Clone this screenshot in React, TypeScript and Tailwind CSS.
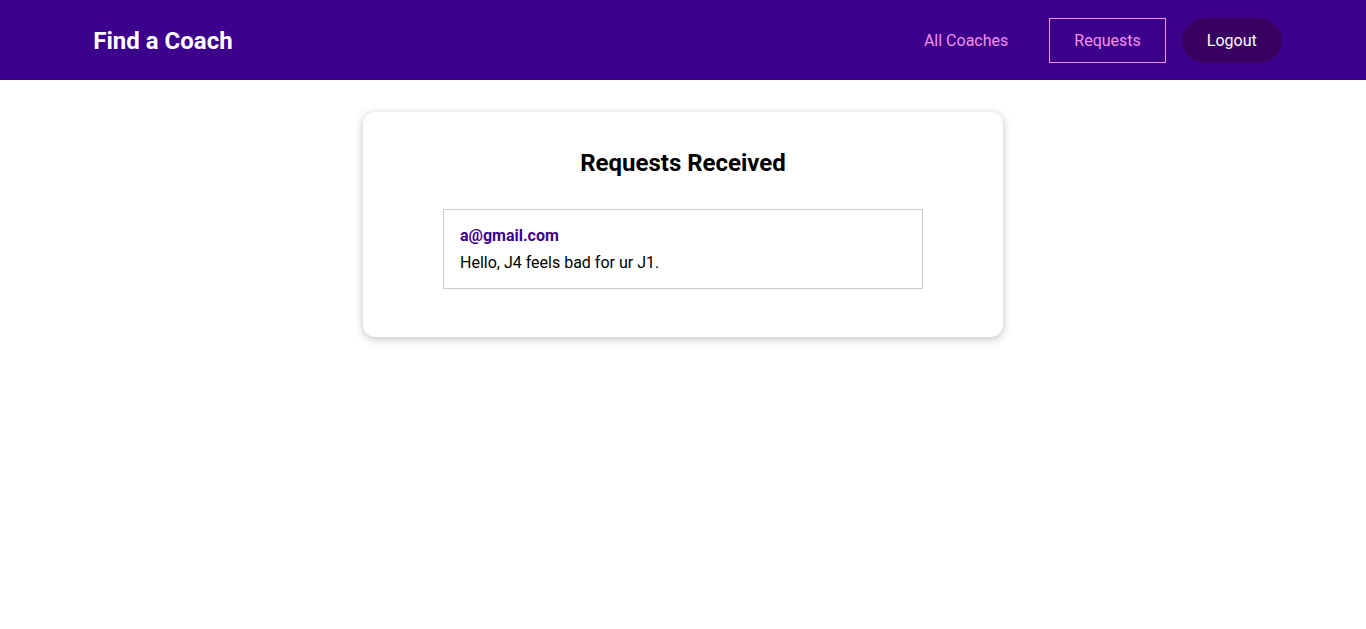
const requests = [{ id: 'r1', email: 'a@gmail.com', message: 'Hello, J4 feels bad for ur J1.' }]

export default function App() {
  return (
    <div className="min-h-screen bg-white text-black" style={{ fontFamily: 'Roboto, "Noto Sans", sans-serif' }}>
      <header className="h-20 bg-[#3d008d] flex items-center pt-px">
        <nav className="w-[90%] mx-auto flex items-center justify-between">
          <h1 className="m-0 text-2xl font-bold leading-7">
            <a href="#" className="text-white pl-[25px] pr-6 py-3">
              Find a Coach
            </a>
          </h1>
          <ul className="flex items-center gap-4 mr-4">
            <li>
              <a href="#" className="block px-6 py-3 border border-transparent text-[#f391e3] text-base leading-[19px]">
                All Coaches
              </a>
            </li>
            <li>
              <a href="#" className="block px-6 py-3 border border-[#f391e3] text-[#f391e3] text-base leading-[19px]">
                Requests
              </a>
            </li>
            <li>
              <button className="px-6 py-3 rounded-[30px] bg-[#3a0061] border border-[#3a0061] text-white text-base leading-[19px]">
                Logout
              </button>
            </li>
          </ul>
        </nav>
      </header>
      <main>
        <section className="max-w-[40rem] mx-auto mt-8 mb-8 p-4 rounded-xl bg-white shadow-[0_2px_8px_rgba(0,0,0,0.26)]">
          <h2 className="text-2xl font-bold text-center leading-7 mt-[21px] mb-8">Requests Received</h2>
          <ul className="max-w-[30rem] mx-auto mt-8 mb-8">
            {requests.map((r) => (
              <li key={r.id} className="border border-[#ccc] p-4">
                <a href="#" className="block font-bold text-[#3d008d] text-base leading-[19px] mb-2">
                  {r.email}
                </a>
                <p className="text-base leading-[19px]">{r.message}</p>
              </li>
            ))}
          </ul>
        </section>
      </main>
    </div>
  )
}
